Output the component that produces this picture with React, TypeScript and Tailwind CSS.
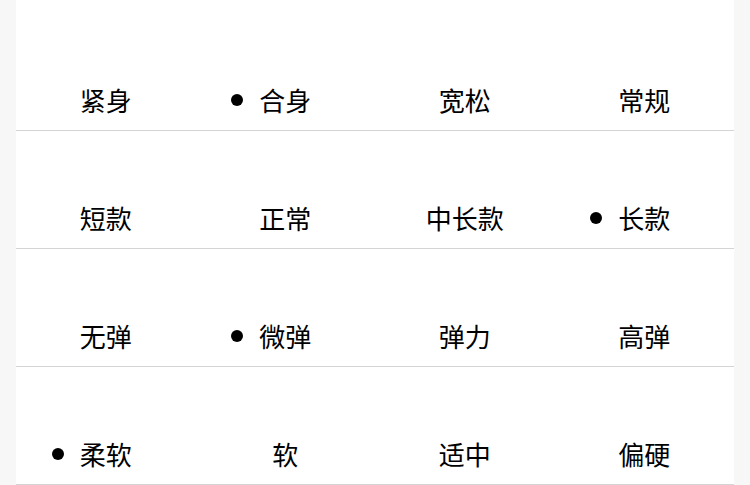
const rows: { items: string[]; selected: number }[] = [
  { items: ["紧身", "合身", "宽松", "常规"], selected: 1 },
  { items: ["短款", "正常", "中长款", "长款"], selected: 3 },
  { items: ["无弹", "微弹", "弹力", "高弹"], selected: 1 },
  { items: ["柔软", "软", "适中", "偏硬"], selected: 0 },
];

export default function App() {
  return (
    <div
      className="min-h-screen bg-[#f7f7f7] px-4"
      style={{ fontFamily: '"Noto Sans CJK SC", "Noto Sans", sans-serif' }}
    >
      <div className="bg-white pt-[13px]">
        {rows.map((row, r) => (
          <div key={r} className="grid h-[118px] grid-cols-4 border-b border-[#d4d4d4]">
            {row.items.map((label, i) => (
              <div key={label} className="flex items-end justify-center pb-[12px]">
                <span className="relative text-[26px] leading-[36px] text-black">
                  {i === row.selected && (
                    <span className="absolute right-full top-1/2 mr-4 h-3 w-3 -translate-y-1/2 rounded-full bg-black" />
                  )}
                  {label}
                </span>
              </div>
            ))}
          </div>
        ))}
      </div>
    </div>
  );
}
